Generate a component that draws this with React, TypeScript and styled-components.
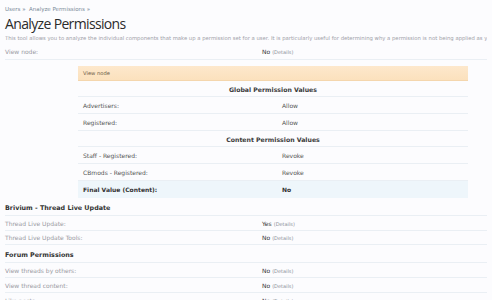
import React from 'react';
import styled, { createGlobalStyle } from 'styled-components';

const GlobalStyle = createGlobalStyle`
  html, body {
    margin: 0;
    padding: 0;
    background: #fcfcfe;
  }
  body {
    font-family: "DejaVu Sans", Verdana, sans-serif;
    color: #333;
    overflow: hidden;
  }
`;

const Page = styled.div`
  padding: 0 5px;
  width: 492px;
  box-sizing: border-box;
`;

const Breadcrumb = styled.div`
  padding-top: 5px;
  font-size: 5.5px;
  color: #7a8a99;
  height: 8px;
  line-height: 8px;
`;

const Title = styled.h1`
  margin: 2px 0 0;
  font-family: "Open Sans", sans-serif;
  font-weight: 400;
  font-size: 14px;
  line-height: 18px;
  color: #2b2b2b;
  letter-spacing: -0.65px;
`;

const Description = styled.div`
  font-size: 5.3px;
  color: #a0a0a8;
  white-space: nowrap;
  overflow: hidden;
  line-height: 9px;
  margin-top: 1px;
`;

const DefRow = styled.div<{ $h?: number }>`
  display: grid;
  grid-template-columns: 257px 1fr;
  align-items: center;
  height: ${p => p.$h ?? 15}px;
  border-bottom: 1px solid #eaeff4;
  font-size: 6px;
  box-sizing: border-box;
`;

const DefLabel = styled.div`
  color: #9a9aa2;
`;

const DefValue = styled.div`
  color: #333;
`;

const Details = styled.span`
  color: #8a8f98;
  font-size: 5px;
  margin-left: 2px;
`;

const SectionHeading = styled.div<{ $top: number; $h: number }>`
  margin-top: ${p => p.$top}px;
  padding-top: ${p => p.$h - 13}px;
  height: 13px;
  line-height: 13px;
  font-weight: bold;
  font-size: 6.4px;
  color: #333;
  border-bottom: 1px solid #eaeff4;
`;

const Panel = styled.div`
  margin: 6px 0 0 73px;
  width: 390px;
  font-size: 6px;
`;

const PanelHeader = styled.div`
  height: 15px;
  line-height: 14px;
  box-sizing: border-box;
  padding-left: 5px;
  font-size: 5.2px;
  color: #6b5a45;
  background: linear-gradient(#fde8cc, #fbe1bd);
  border-bottom: 1px solid #f4d6ad;
`;

const GroupTitle = styled.div`
  height: 16px;
  line-height: 17px;
  box-sizing: border-box;
  text-align: center;
  font-weight: 600;
  font-size: 6.2px;
  color: #3a3a3a;
  border-bottom: 1px solid #eaeff4;
`;

const ValueRow = styled.div<{ $final?: boolean }>`
  display: grid;
  grid-template-columns: 199px 1fr;
  align-items: center;
  height: 17px;
  box-sizing: border-box;
  padding-left: 5px;
  border-bottom: 1px solid ${p => (p.$final ? 'transparent' : '#eaeff4')};
  background: ${p => (p.$final ? '#eef6fb' : 'transparent')};
  font-weight: ${p => (p.$final ? 'bold' : 'normal')};
  color: ${p => (p.$final ? '#333' : '#555')};
`;

type Perm = { label: string; value: string; h?: number };

const sections: { title: string; top: number; h: number; rows: Perm[] }[] = [
  {
    title: 'Brivium - Thread Live Update',
    top: 1,
    h: 16,
    rows: [
      { label: 'Thread Live Update:', value: 'Yes' },
      { label: 'Thread Live Update Tools:', value: 'No', h: 14 },
    ],
  },
  {
    title: 'Forum Permissions',
    top: 0,
    h: 17,
    rows: [
      { label: 'View threads by others:', value: 'No' },
      { label: 'View thread content:', value: 'No' },
      { label: 'Like posts:', value: 'No' },
    ],
  },
];

const App = () => {
  return (
    <>
      <GlobalStyle />
      <Page>
        <Breadcrumb>Users » &nbsp;Analyze Permissions »</Breadcrumb>
        <Title>Analyze Permissions</Title>
        <Description>
          This tool allows you to analyze the individual components that make up a permission set for a user. It is
          particularly useful for determining why a permission is not being applied as you would expect.
        </Description>

        <DefRow $h={17}>
          <DefLabel>View node:</DefLabel>
          <DefValue>
            No<Details>(Details)</Details>
          </DefValue>
        </DefRow>

        <Panel>
          <PanelHeader>View node</PanelHeader>
          <GroupTitle>Global Permission Values</GroupTitle>
          <ValueRow>
            <div>Advertisers:</div>
            <div>Allow</div>
          </ValueRow>
          <ValueRow>
            <div>Registered:</div>
            <div>Allow</div>
          </ValueRow>
          <GroupTitle>Content Permission Values</GroupTitle>
          <ValueRow>
            <div>Staff - Registered:</div>
            <div>Revoke</div>
          </ValueRow>
          <ValueRow>
            <div>CBmods - Registered:</div>
            <div>Revoke</div>
          </ValueRow>
          <ValueRow $final>
            <div>Final Value (Content):</div>
            <div>No</div>
          </ValueRow>
        </Panel>

        {sections.map(section => (
          <React.Fragment key={section.title}>
            <SectionHeading $top={section.top} $h={section.h}>
              {section.title}
            </SectionHeading>
            {section.rows.map(row => (
              <DefRow key={row.label} $h={row.h}>
                <DefLabel>{row.label}</DefLabel>
                <DefValue>
                  {row.value}
                  <Details>(Details)</Details>
                </DefValue>
              </DefRow>
            ))}
          </React.Fragment>
        ))}
      </Page>
    </>
  );
};

export default App;
